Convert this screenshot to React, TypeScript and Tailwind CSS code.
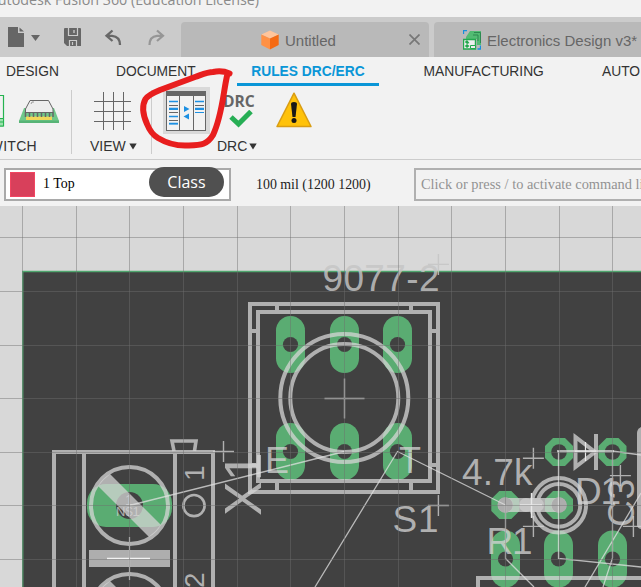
import React from "react";

const INK = "rgba(213,213,213,0.75)";
const THIN = "rgba(225,225,225,0.75)";
const PAD = "#5aac72";
const BOARD = "#414141";

const gridX = [22.5, 76.5, 129.5, 183.5, 237.5, 290.5, 344.5, 398.5, 451.5, 505.5, 559.5, 612.5];
const gridY = [237.5, 291.5, 345.5, 398.5, 452.5, 505.5, 559.5];

function Caret() {
  return (
    <svg width="8" height="7" viewBox="0 0 8 7">
      <path d="M0.3 0.5H7.7L4 6.5Z" fill="#333" />
    </svg>
  );
}

function Cross({ x, y, r = 10.5, color = INK }: { x: number; y: number; r?: number; color?: string }) {
  return <path d={`M${x - r} ${y}H${x + r}M${x} ${y - r}V${y + r}`} stroke={color} strokeWidth="1.4" fill="none" />;
}

function LongPad({ x, y }: { x: number; y: number }) {
  return (
    <g>
      <rect x={x - 14.5} y={y - 28.5} width="29" height="57" rx="14.5" fill={PAD} />
      <circle cx={x} cy={y} r="7.6" fill={BOARD} />
    </g>
  );
}

function OctPad({ x, y, hole = BOARD }: { x: number; y: number; hole?: string }) {
  return (
    <g transform={`translate(${x} ${y})`}>
      <path d="M-6 -14H6L14 -6V6L6 14H-6L-14 6V-6Z" fill={PAD} />
      <circle r="7.8" fill={hole} />
    </g>
  );
}

function Label({ x, y, size = 37, width, turn, children, color = INK }: {
  x: number; y: number; size?: number; width?: number; turn?: boolean; children: string; color?: string;
}) {
  return (
    <text
      transform={`translate(${x} ${y})${turn ? " rotate(-90)" : ""}`}
      fontFamily="'Liberation Sans', Arial, sans-serif"
      fontSize={size}
      textLength={width}
      fill={color}
    >
      {children}
    </text>
  );
}

function Terminal({ y }: { y: number }) {
  return (
    <g>
      <rect x="87" y={y - 21.5} width="85" height="43" rx="19" fill={PAD} />
      <circle cx="129.5" cy={y} r="13.5" fill={BOARD} />
      <circle cx="129.5" cy={y} r="38.5" fill="none" stroke={INK} strokeWidth="4" />
      <path d={`M98 ${y - 19.5}Q102 ${y - 27} 110 ${y - 31.5}L161 ${y + 19.5}Q157 ${y + 27} 149 ${y + 31.5}Z`} fill={INK} />
    </g>
  );
}

function Board() {
  return (
    <svg className="block" width="641" height="381" viewBox="0 206 641 381">
      <rect x="0" y="206" width="641" height="381" fill="#d8d8d8" />
      <rect x="23" y="272" width="620" height="320" fill={BOARD} />
      <path d="M22.7 590V271.5H641" fill="none" stroke="#4fa66e" strokeWidth="1.4" />

      {[290.5, 344.5, 397.5].map((x) => (
        <g key={x}>
          <LongPad x={x} y={344.5} />
          <LongPad x={x} y={451.5} />
        </g>
      ))}
      <g fill="none" stroke={INK} strokeWidth="4">
        <rect x="250" y="304" width="188" height="188" />
        <rect x="258" y="312" width="172" height="169" />
        <path d="M277 306V310M411 306V310M277 483V490M411 483V490M252 331H256M432 331H436M432 465H436M252 465H256" />
        <circle cx="344.3" cy="398" r="64" />
        <circle cx="344.3" cy="398" r="54" />
      </g>
      <Cross x={344.5} y={398.5} r={20} />
      <Label x={322.5} y={291} width={117} color="rgba(197,197,197,0.84)">9077-2</Label>
      <Cross x={438.4} y={264.4} color="rgba(197,197,197,0.84)" />
      <Cross x={438.4} y={505.5} />
      <Cross x={223.5} y={451.5} />
      <Label x={392.5} y={532} width={46}>S1</Label>
      <Label x={265} y={473} size={36}>E</Label>
      <Label x={399} y={473} size={36}>T</Label>
      <Label x={261} y={516} size={52} turn>X1</Label>

      <g fill="none" stroke={INK} strokeWidth="4">
        <path d="M52 452H215M54 454V590M84 454V590M175 454V590M213 454V590" />
        <path d="M174 451L172 441H196L194.5 451" strokeWidth="3.6" />
        <circle cx="194" cy="505.6" r="10.6" strokeWidth="2.7" />
      </g>
      <Terminal y={505.5} />
      <Terminal y={612.5} />
      <rect x="89" y="550" width="81" height="17" fill="#aeaeae" />
      <path d="M107 558.5H150" stroke="#f2f2f2" strokeWidth="1.5" />
      <path d="M129.5 537V580" stroke="#d4d4d4" strokeWidth="1.2" />
      <Label x={125} y={505} size={14}>1</Label>
      <Label x={116} y={516} size={13}>N$1</Label>
      <Label x={203.7} y={481} size={28} turn>1</Label>
      <Label x={203.7} y={588} size={28} turn>2</Label>

      <OctPad x={559} y={452} />
      <OctPad x={612.5} y={452} />
      <OctPad x={505.3} y={505} hole="#adadad" />
      <OctPad x={559} y={505} hole="#adadad" />
      {[505.5, 558.5, 612.5].map((x) => <LongPad key={x} x={x} y={559} />)}
      <g fill="none" stroke={INK} strokeWidth="4">
        <path d="M575.5 437V467L595 452Z" />
        <path d="M596 434V470" />
        <path d="M557 451.2H614" strokeWidth="2.6" />
        <circle cx="558.8" cy="505.3" r="27.2" />
        <circle cx="558.8" cy="505.3" r="21.4" />
        <path d="M478 590V578H645" />
      </g>
      <rect x="498" y="498" width="68" height="14" rx="7" fill={INK} />
      <circle cx="526" cy="505" r="7" fill="#c6c6c6" />
      <circle cx="537" cy="505" r="7" fill="#c6c6c6" />
      <circle cx="505.3" cy="505" r="7.5" fill="#adadad" />
      <circle cx="559" cy="505" r="7.5" fill="#adadad" />
      <path d="M531.5 493V518M520 505H542" stroke="#e8e8e8" strokeWidth="1.4" />
      <path d="M585.5 442V461M575 451.2H596" stroke="#e8e8e8" strokeWidth="1.2" />
      <path d="M641 427Q637 429 637 433V525Q637 528 641 529Z" fill="#b0b0b0" />
      <Label x={462} y={485} width={70.5}>4.7k</Label>
      <Label x={486.5} y={554} width={46}>R1</Label>
      <Label x={575} y={503.5} width={46}>D1</Label>
      <Label x={634} y={527} width={48} turn>C3</Label>
      <Cross x={533.4} y={458.3} />
      <Cross x={533.4} y={526.4} />
      <Cross x={620.4} y={475.6} />
      <Cross x={633.4} y={526.4} />

      <g stroke={THIN} strokeWidth="1.3" fill="none">
        <path d="M129.5 505.5L344.5 451.5M505.5 505L397.5 451.5L315 587" />
        <path d="M505.5 505V558.5L534 587M612 451L641 455" />
        <path d="M558.5 451V558.5L641 567M612.5 451V558L603 587M585 587L641 493" />
      </g>

      <g stroke="rgba(110,110,110,0.45)" strokeWidth="1">
        {gridX.map((x) => <path key={x} d={`M${x} 206V587`} />)}
        {gridY.map((y) => <path key={y} d={`M0 ${y}H641`} />)}
      </g>
    </svg>
  );
}

function QuickBar() {
  return (
    <svg className="block shrink-0" width="181" height="40" viewBox="0 17 181 40">
      <path d="M8 27H18V33H24V47H8Z" fill="#666" />
      <path d="M19.5 27.5V31.5H24Z" fill="#666" />
      <path d="M31 35H40L35.5 41Z" fill="#666" />
      <path d="M65 28H80Q81 28 81 29V46H67L64 43V29Q64 28 65 28Z" fill="#666" />
      <path d="M68.5 28V35.5H77.5V28M69.5 46V40.5H76.5V46M72.5 42V45" fill="none" stroke="#ccc" strokeWidth="1.2" />
      <path d="M74 30V33" stroke="#ccc" strokeWidth="1.3" />
      <path d="M112.500 30.500L106.500 35.800L112.500 41M107.500 35.800H112Q120 36.500 120 45" fill="none" stroke="#686868" strokeWidth="2.300" />
      <path d="M157 30.500L163 35.800L157 41M162.500 35.800H157Q149.500 36.500 149.500 45" fill="none" stroke="#969696" strokeWidth="2.200" />
    </svg>
  );
}

function CubeIcon() {
  return (
    <svg width="18" height="20" viewBox="0 0 18 20">
      <path d="M9 0.500L17.700 4.500L9 8.500L0.300 4.500Z" fill="#ffc59b" />
      <path d="M0.300 4.500L9 8.500V19.500L0.300 15Z" fill="#ff9145" />
      <path d="M17.700 4.500L9 8.500V19.500L17.700 15Z" fill="#f56a13" />
    </svg>
  );
}

function DesignIcon() {
  return (
    <svg width="18" height="20" viewBox="0 0 18 20">
      <path d="M7 1H18V15H14V9H3V7Z" fill="#52bb73" />
      <path d="M10 5H15V11M11 2.500H17.500V13" fill="none" stroke="#2d8951" strokeWidth="1" />
      <path d="M0.500 9.500H12.500V19H0.500Z" fill="#eee" stroke="#23a84e" strokeWidth="1.400" />
      <path d="M4 10L6.500 13L4 14L6.500 16L4 18L1.800 16L4 14L1.800 12Z" fill="#23a84e" />
      <path d="M7.500 15.500H12.500V18.500H7.500Z" fill="#eee" stroke="#23a84e" />
      <path d="M0.500 4V0.500H4M14.500 19H17.500V15.500" fill="none" stroke="#1690dc" strokeWidth="1.300" />
    </svg>
  );
}

function ChipIcon() {
  return (
    <svg className="block" width="71" height="44" viewBox="0 88 71 44">
      <path d="M-4 95.500H3.500V126H-4" fill="none" stroke="#25b34f" strokeWidth="1.200" />
      <path d="M-4 118.500H3.500V126H-4M-4 122H3" fill="#9be2ad" stroke="#25b34f" />
      <path d="M24 108H54L59 121V123H19V121Z" fill="#70c88a" />
      <path d="M19 120.500H59V123H19Z" fill="#57b476" />
      <path d="M26 116.500H52V120H26Z" fill="#f1d75a" />
      <path d="M30 100.500H48.500L53 109V112.500H25.500V109Z" fill="#ededed" stroke="#666" />
      <path d="M25.500 112V117M29.500 112V117M33.500 112V117M37.500 112V117M41.500 112V117M45.500 112V117M49.500 112V117M53 112V117" stroke="#666" strokeWidth="1.500" />
      <path d="M31 104L32 102H34" fill="none" stroke="#888" strokeWidth="0.800" />
    </svg>
  );
}

function ManagerIcon() {
  return (
    <svg className="block" width="40" height="40" viewBox="0 0 40 40">
      <rect x="0.500" y="0.500" width="39" height="39" fill="#f2f2f2" stroke="#666" />
      <rect width="40" height="5" fill="#666" />
      <path d="M13.500 5V39M27.500 5V39" stroke="#666" />
      <path d="M3 10.500H12M3 17.500H12M3 25.500H12M3 32.500H12M29 10.500H38M29 17.500H38" stroke="#1d90e2" strokeWidth="1.300" />
      <path d="M3 18.500H12M3 33H12M29 18.500H38M29 21.500H38" stroke="#1d90e2" />
      <path d="M3 14.500H12M3 21.500H12M3 29.500H12M29 14.500H38" stroke="#666" />
      <path d="M18 15L23.500 18L18 21ZM23 22.500V28.500L17.500 25.500Z" fill="#1d90e2" />
    </svg>
  );
}

function WarningIcon() {
  return (
    <svg className="block" width="36" height="36" viewBox="0 0 36 36">
      <path d="M18 1.200L35 34.500H1Z" fill="#ffc20a" stroke="#d99d13" strokeWidth="1.500" strokeLinejoin="round" />
      <path d="M15 12Q15 10 18 10Q21 10 21 12L19.500 25H16.500Z" fill="#181818" />
      <circle cx="18" cy="28.500" r="2.500" fill="#181818" />
    </svg>
  );
}

const label = "flex items-center text-[14px] leading-4 text-[#333]";

export default function App() {
  return (
    <div className="relative flex h-[587px] w-[641px] flex-col overflow-hidden bg-[#f2f2f2] font-['Liberation_Sans',Arial,sans-serif]">
      <header className="flex h-[17px] shrink-0 items-start overflow-hidden">
        <div className="flex h-[10px] w-[259px] items-end justify-end whitespace-nowrap font-['Open_Sans','Noto_Sans',sans-serif] text-[14.3px] leading-[20px] text-[#8a8a8a]">
          Autodesk Fusion 360 (Education License)
        </div>
      </header>

      <div className="flex h-10 shrink-0 bg-[#cbcbcb]">
        <QuickBar />
        <div className="mt-[5px] flex h-[35px] w-[248px] shrink-0 items-center rounded-t-[4px] bg-[#b9b9b9] pl-20 text-[15px] text-[#666]">
          <CubeIcon />
          <span className="ml-[6px] mt-[3px] w-[121px]">Untitled</span>
          <svg className="ml-[3px]" width="11" height="11" viewBox="0 0 11 11">
            <path d="M0.500 0.500L10.500 10.500M10.500 0.500L0.500 10.500" stroke="#777" strokeWidth="1.700" />
          </svg>
        </div>
        <div className="ml-[5px] mt-[5px] flex h-[35px] w-[212px] shrink-0 items-center rounded-tl-[4px] bg-[#b9b9b9] pl-[29px] text-[15px] text-[#666]">
          <DesignIcon />
          <span className="ml-[6px] mt-[3px] whitespace-nowrap">Electronics Design v3*</span>
        </div>
      </div>

      <nav className="flex h-[31px] shrink-0 whitespace-nowrap pl-[6px] text-[13.8px] leading-[29px] text-[#333]">
        <span className="w-[110px] shrink-0">DESIGN</span>
        <span className="w-[121px] shrink-0">DOCUMENT</span>
        <span className="h-[29px] w-[142px] shrink-0 border-b-[3px] border-[#0a96d7] text-center text-[13.8px] font-bold text-[#0a96d7]">RULES DRC/ERC</span>
        <span className="ml-[44.5px] w-[178.500px] shrink-0">MANUFACTURING</span>
        <span>AUTO</span>
      </nav>

      <section className="flex h-[71px] shrink-0">
        <div className="w-[71px] shrink-0">
          <ChipIcon />
          <div className={`${label} mt-[6px] w-[41px] justify-end gap-[4px]`}>
            <span className="tracking-[0.3px]">SWITCH</span>
            <Caret />
          </div>
        </div>
        <div className="mt-[2px] h-[64px] w-px bg-[#ccc]" />
        <div className="w-[79px] shrink-0 pl-[18px]">
          <svg className="ml-[4px] mt-[4px] block" width="37" height="38" viewBox="0 0 37 38">
            <path d="M9.500 0V38M19.500 0V38M29.500 0V38M0 9.500H37M0 19.500H37M0 29.500H37" stroke="#666" strokeWidth="1" />
          </svg>
          <div className={`${label} mt-[8px] gap-[3px]`}>
            <span>VIEW</span>
            <Caret />
          </div>
        </div>
        <div className="mt-[2px] h-[64px] w-px bg-[#ccc]" />
        <div className="pl-[11px]">
          <div className="flex h-[50px]">
            <div className="-mt-px h-[47px] w-[47px] bg-[#d9d9d9] pl-[3px] pt-[4px]">
              <ManagerIcon />
            </div>
            <div className="ml-[13px] mt-[5px] w-[34px]">
              <div className="font-['Open_Sans','Noto_Sans',sans-serif] text-[15.6px] font-bold leading-[17px] text-[#666]">DRC</div>
              <svg className="ml-[6px] block" width="24" height="18" viewBox="0 0 24 18">
                <path d="M2 7L9.500 14L22 1.500" fill="none" stroke="#27ae55" strokeWidth="5" />
              </svg>
            </div>
            <div className="ml-[19px] mt-[4px]"><WarningIcon /></div>
          </div>
          <div className={`${label} ml-[54px] gap-[2px]`}>
            <span>DRC</span>
            <Caret />
          </div>
        </div>
      </section>

      <div className="flex h-[47px] shrink-0 border-t border-[#ccc] pt-[8px] font-['Liberation_Serif',serif] text-[13.9px] text-[#222]">
        <div className="ml-[4px] flex h-[33px] w-[227px] shrink-0 items-center border-2 border-[#a9a9a9] bg-white pl-[4px]">
          <div className="h-[25px] w-[25px] border border-[#f24561] bg-[#d8405b]" />
          <span className="ml-[8px] w-[106px] text-black">1 Top</span>
          <div className="-mt-[6px] flex h-[30px] w-[75px] shrink-0 items-center justify-center rounded-full bg-[#505050] font-['Open_Sans','Noto_Sans',sans-serif] text-[16px] text-white">Class</div>
        </div>
        <span className="ml-[25px] w-[158px] shrink-0 leading-[34px]">100 mil (1200 1200)</span>
        <div className="flex h-[33px] w-[240px] shrink-0 items-center whitespace-nowrap border-2 border-[#b0b0b0] pl-[5px] text-[14.4px] text-[#929292]">
          Click or press / to activate command line box
        </div>
      </div>

      <Board />

      <svg className="pointer-events-none absolute left-0 top-0" width="260" height="160" viewBox="0 0 260 160">
        <path
          d="M229.500 73.500C224 71 218 71 213 72C207 72 201 75 195 77L160 90Q148 95 145.500 99C141.500 106 143 115 147 124Q151 134 158 138C168 144 179 146 188 145.500C201 145 207 145 213 135C222 116 223 94 227 76"
          fill="none" stroke="#e81e1e" strokeWidth="6" strokeLinecap="round" strokeLinejoin="round"
        />
      </svg>
    </div>
  );
}
